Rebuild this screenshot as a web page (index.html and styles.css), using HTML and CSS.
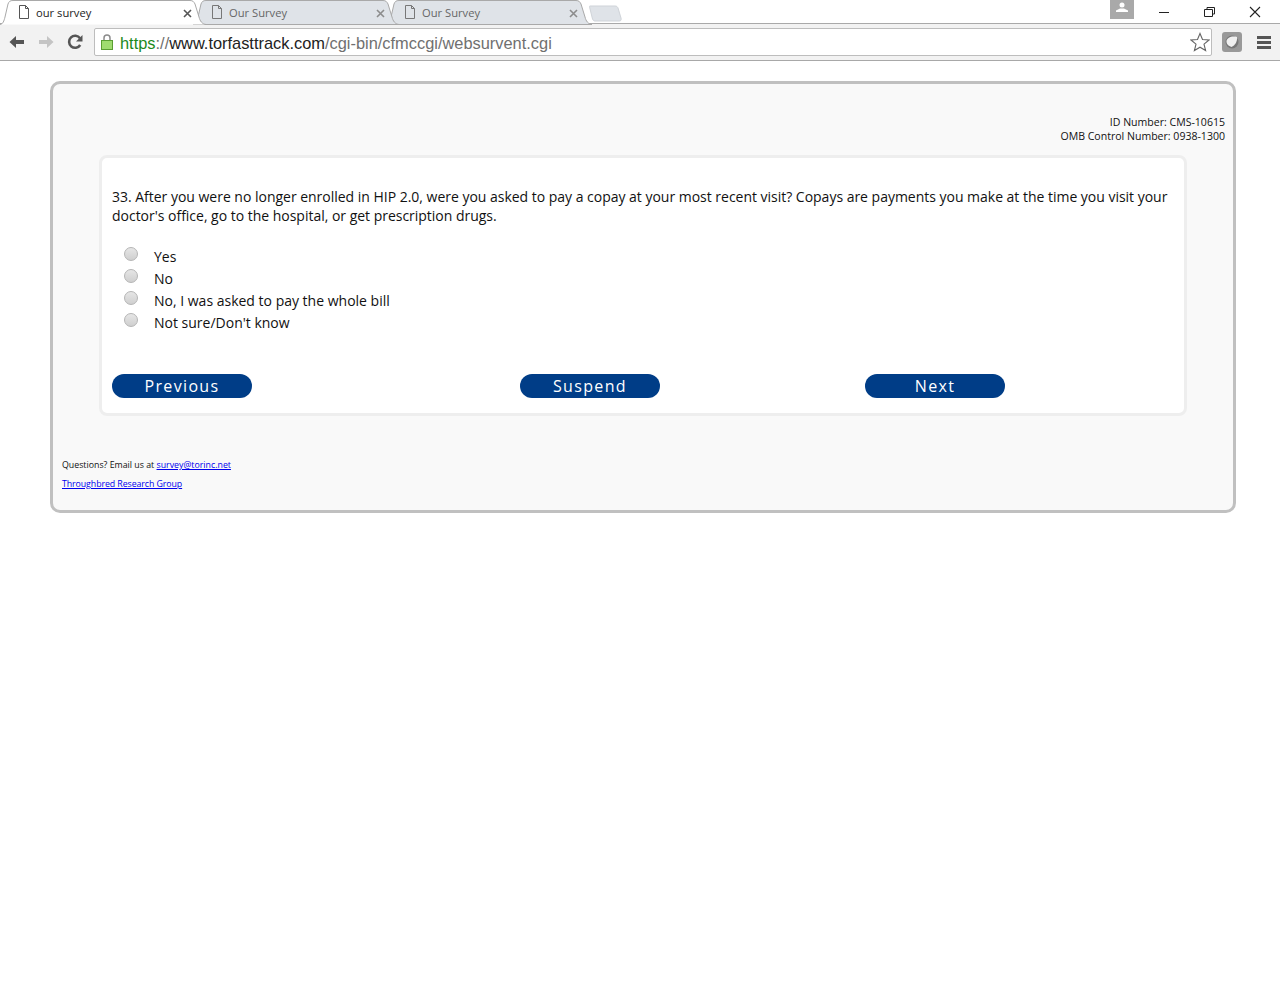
FILE: index.html
```html
<!DOCTYPE html>
<html lang="en">
<head>
    <meta charset="UTF-8">
    <title>our survey</title>
    <link rel="stylesheet" href="styles.css">
</head>
<body>
    <!-- Browser chrome -->
    <div class="chrome">
        <div class="tabstrip">
            <div class="tab tab-active">
                <svg class="tab-shape" width="207" height="25" viewBox="0 0 207 25"><path d="M0 24.500C3 24 4 21 5 17L8 4C9 1.500 10 .5 13 .5H190C193 .5 194 2 195 4L199 17C200 21 202 24 206 24.500" fill="#fff" stroke="#a9a9a9"/></svg>
                <svg class="page-icon" width="12" height="14" viewBox="0 0 12 14"><path d="M1.500 .5H7.500L10.500 3.500V13.500H1.500ZM7.500 .5V3.500H10.500" fill="#fff" stroke="#555"/></svg>
                <span class="tab-title">our survey</span>
                <svg class="tab-close" width="9" height="9" viewBox="0 0 9 9"><path d="M1 1L8 8M8 1L1 8" stroke="#555" stroke-width="1.600"/></svg>
            </div>
            <div class="tab tab-second">
                <svg class="tab-shape" width="207" height="25" viewBox="0 0 207 25"><path d="M0 24.500C3 24 4 21 5 17L8 4C9 1.500 10 .5 13 .5H190C193 .5 194 2 195 4L199 17C200 21 202 24 206 24.500Z" fill="#dfe3e8" stroke="#a9a9a9"/></svg>
                <svg class="page-icon" width="12" height="14" viewBox="0 0 12 14"><path d="M1.500 .5H7.500L10.500 3.500V13.500H1.500ZM7.500 .5V3.500H10.500" fill="none" stroke="#777"/></svg>
                <span class="tab-title">Our Survey</span>
                <svg class="tab-close" width="9" height="9" viewBox="0 0 9 9"><path d="M1 1L8 8M8 1L1 8" stroke="#8c8c8c" stroke-width="1.600"/></svg>
            </div>
            <div class="tab">
                <svg class="tab-shape" width="207" height="25" viewBox="0 0 207 25"><path d="M0 24.500C3 24 4 21 5 17L8 4C9 1.500 10 .5 13 .5H190C193 .5 194 2 195 4L199 17C200 21 202 24 206 24.500Z" fill="#dfe3e8" stroke="#a9a9a9"/></svg>
                <svg class="page-icon" width="12" height="14" viewBox="0 0 12 14"><path d="M1.500 .5H7.500L10.500 3.500V13.500H1.500ZM7.500 .5V3.500H10.500" fill="none" stroke="#777"/></svg>
                <span class="tab-title">Our Survey</span>
                <svg class="tab-close" width="9" height="9" viewBox="0 0 9 9"><path d="M1 1L8 8M8 1L1 8" stroke="#8c8c8c" stroke-width="1.600"/></svg>
            </div>
            <svg class="new-tab" width="34" height="17" viewBox="0 0 34 17"><path d="M1 1H26C28 1 28.500 2 29 3L32 13C32.500 15 32 16 30 16H6C4.500 16 4 15 3.500 14L.8 3C.5 2 0 1 1 1Z" fill="#dfe3e8" stroke="#cfd3d8"/></svg>
            <div class="window-controls">
                <div class="profile">
                    <svg width="12" height="10" viewBox="0 0 12 10"><circle cx="6" cy="3" r="2.500" fill="#fff"/><path d="M0 10V8.500L4 6.500H8L12 8.500V10Z" fill="#fff"/></svg>
                </div>
                <svg class="win-btn" width="45" height="24" viewBox="0 0 45 24"><path d="M18 12.500H28" stroke="#222"/></svg>
                <svg class="win-btn" width="46" height="24" viewBox="0 0 46 24"><path d="M18.500 9.500H26.500V16.500H18.500ZM21 9.500V7.500H28.500V14H26.500" fill="none" stroke="#222"/></svg>
                <svg class="win-btn" width="46" height="24" viewBox="0 0 46 24"><path d="M18 7L28 17M28 7L18 17" stroke="#222" stroke-width="1.100"/></svg>
            </div>
        </div>
        <div class="toolbar">
            <svg class="nav-icon" width="18" height="16" viewBox="0 0 18 16"><path d="M1.500 8L8 2V6H16V10H8V14Z" fill="#555"/></svg>
            <svg class="nav-icon" width="18" height="16" viewBox="0 0 18 16"><path d="M16.500 8L10 2V6H2V10H10V14Z" fill="#c4c4c4"/></svg>
            <svg class="nav-icon nav-reload" width="18" height="16" viewBox="0 0 18 16"><path d="M13.200 11A6 6 0 1 1 13 4.300" fill="none" stroke="#555" stroke-width="2.600"/><path d="M15.500 1V7.500H9Z" fill="#555"/></svg>
            <div class="omnibox">
                <svg class="lock" width="14" height="18" viewBox="0 0 14 18"><path d="M4 8V5A3 3 0 0 1 10 5V8" fill="none" stroke="#8c8c8c" stroke-width="1.500"/><rect x="1.500" y="7.500" width="11" height="9" fill="#9fdc6f" stroke="#5a9e32"/></svg>
                <span class="url"><span class="url-https">https</span><span class="url-dim">://</span><span class="url-host">www.torfasttrack.com</span><span class="url-dim">/cgi-bin/cfmccgi/websurvent.cgi</span></span>
                <svg class="star" width="20" height="20" viewBox="0 0 20 20"><path d="M10 1.500L12.500 7.500L19 8L14 12.200L15.600 18.500L10 15.200L4.400 18.500L6 12.200L1 8L7.500 7.500Z" fill="#fff" stroke="#666" stroke-width="1.100"/></svg>
            </div>
            <svg class="ext-icon" width="20" height="20" viewBox="0 0 20 20"><rect width="20" height="20" rx="3" fill="#999"/><circle cx="10" cy="10" r="6.500" fill="#777"/><path d="M4.500 9C5 5.500 10 3.500 15 5C15.500 9.500 13 13.500 9.500 15C6.500 14 4.200 12 4.500 9Z" fill="#f0f0f0"/></svg>
            <svg class="menu-icon" width="14" height="13" viewBox="0 0 14 13"><path d="M0 0H14V3H0ZM0 5H14V8H0ZM0 10H14V13H0Z" fill="#555"/></svg>
        </div>
    </div>

    <!-- Survey page -->
    <div class="survey">
        <div class="form-ids">
            <div>ID Number: CMS-10615</div>
            <div>OMB Control Number: 0938-1300</div>
        </div>
        <div class="question-box">
            <p class="question">33. After you were no longer enrolled in HIP 2.0, were you asked to pay a copay at your most recent visit? Copays are payments you make at the time you visit your doctor's office, go to the hospital, or get prescription drugs.</p>
            <div class="answers">
                <label class="answer"><span class="radio"></span>Yes</label>
                <label class="answer"><span class="radio"></span>No</label>
                <label class="answer"><span class="radio"></span>No, I was asked to pay the whole bill</label>
                <label class="answer"><span class="radio"></span>Not sure/Don't know</label>
            </div>
            <div class="buttons">
                <button class="btn">Previous</button>
                <button class="btn btn-suspend">Suspend</button>
                <button class="btn btn-next">Next</button>
            </div>
        </div>
        <div class="survey-footer">
            <p>Questions? Email us at <a href="#">survey@torinc.net</a></p>
            <p class="footer-org"><a href="#">Throughbred Research Group</a></p>
        </div>
    </div>
</body>
</html>
```

FILE: styles.css
```css
body {
    margin: 0;
    background-color: #fff;
    font-family: "Open Sans", "Noto Sans", sans-serif;
    color: #111;
}

/* browser chrome */
.chrome {
    height: 61px;
    box-sizing: border-box;
    border-bottom: 1px solid #a8a8a8;
    background-color: #f2f2f2;
}

.tabstrip {
    height: 23px;
    display: flex;
    background-color: #fff;
    border-bottom: 1px solid #a9a9a9;
}

.tab {
    position: relative;
    width: 193px;
    height: 24px;
    display: flex;
    align-items: center;
    flex-shrink: 0;
    font-size: 11.2px;
    color: #666;
}

.tab-shape {
    position: absolute;
    left: 0;
    top: 0;
}

.page-icon {
    position: relative;
    margin-left: 18px;
}

.tab-title {
    position: relative;
    margin-left: 6px;
    width: 147px;
}

.tab-close {
    position: relative;
    top: 1px;
}

.tab-active {
    color: #222;
    z-index: 2;
}

.tab-second {
    z-index: 1;
}

.new-tab {
    position: relative;
    margin: 5px 0 0 10px;
}

.window-controls {
    margin-left: auto;
    padding-right: 2px;
    display: flex;
}

.profile {
    width: 24px;
    height: 19px;
    margin-right: 7px;
    background-color: #a9a9a9;
    display: flex;
    justify-content: center;
}

.profile svg {
    margin-top: 2px;
}

.win-btn {
    display: block;
}

.toolbar {
    height: 36px;
    display: flex;
    align-items: center;
    background-color: #f2f2f2;
    padding: 0 9px 0 8px;
}

.nav-icon {
    margin-right: 11px;
    flex-shrink: 0;
}

.nav-reload {
    margin-left: 1px;
    margin-right: 10px;
}

.omnibox {
    flex: 1;
    height: 26px;
    margin-left: -1px;
    display: flex;
    align-items: center;
    background-color: #fff;
    border: 1px solid #bdbdbd;
    border-radius: 2px;
}

.lock {
    margin-left: 5px;
}

.url {
    padding-top: 2px;
    margin-left: 6px;
    font-family: "Liberation Sans", Arial, sans-serif;
    font-size: 16.4px;
    color: #222;
}

.url-https {
    color: #1c8a1c;
}

.url-dim {
    color: #707070;
}

.star {
    margin-left: auto;
    margin-right: 1px;
}

.ext-icon {
    margin-left: 10px;
}

.menu-icon {
    margin-left: 15px;
}

/* survey */
.survey {
    width: 1126px;
    height: 395px;
    margin: 20px 0 0 50px;
    padding: 31px 8px 0 46px;
    border: 3px solid #c0c0c0;
    border-radius: 10px;
    background-color: #f9f9f9;
}

.form-ids {
    text-align: right;
    font-size: 10.55px;
    line-height: 14px;
}

.question-box {
    margin-top: 12px;
    margin-right: 38px;
    height: 255px;
    padding: 0 9px 0 10px;
    border: 3px solid #eee;
    border-radius: 8px;
    background-color: #fff;
}

.question {
    margin: 0;
    padding-top: 29px;
    font-size: 14px;
    line-height: 19px;
    letter-spacing: -0.017px;
}

.answers {
    margin-top: 20px;
}

.answer {
    display: flex;
    height: 22px;
    align-items: center;
    font-size: 14px;
}

.radio {
    width: 12px;
    height: 12px;
    margin: 0 16px 0 12px;
    position: relative;
    top: -2px;
    border: 1px solid #b5b5b5;
    border-radius: 50%;
    background: linear-gradient(#e6e6e6, #cfcfcf);
}

.buttons {
    display: flex;
    margin-top: 41px;
}

.btn {
    width: 140px;
    height: 24px;
    padding: 0;
    border: none;
    border-radius: 12px;
    background-color: #003d87;
    color: #fff;
    font-family: "Open Sans", "Noto Sans", sans-serif;
    font-size: 16px;
    letter-spacing: 1.35px;
}

.btn-suspend {
    margin-left: 268px;
}

.btn-next {
    margin-left: 205px;
}

.survey-footer {
    margin-left: -37px;
    margin-top: 44px;
    font-size: 8.8px;
}

.survey-footer p {
    margin: 0 0 8px 0;
    line-height: 11px;
}

.survey-footer .footer-org {
    letter-spacing: -0.08px;
}

.survey-footer a {
    color: #00e;
}
```
